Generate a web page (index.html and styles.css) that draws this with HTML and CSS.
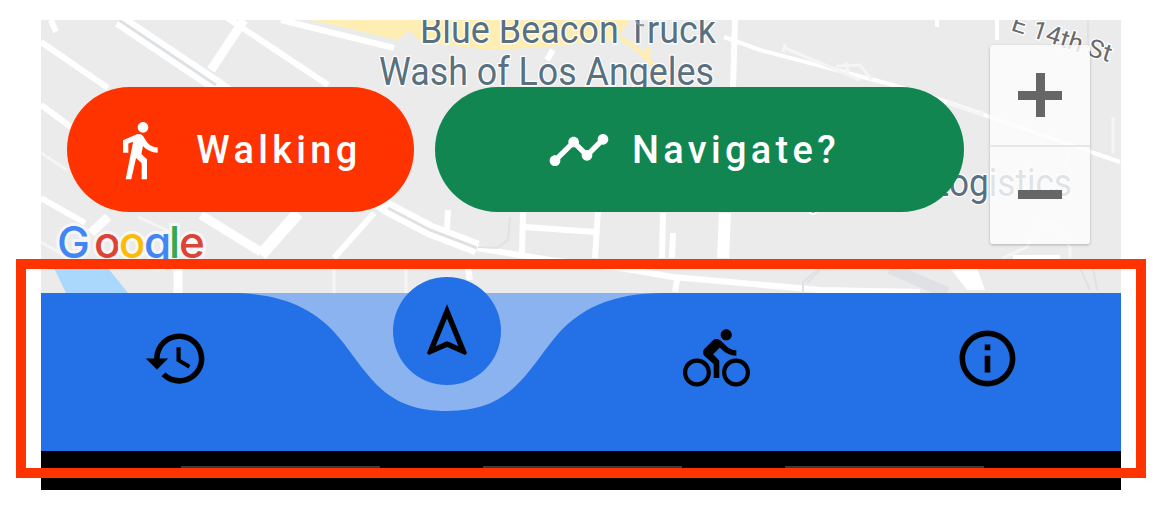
FILE: index.html
```html
<!DOCTYPE html>
<html lang="en">
<head>
    <meta charset="UTF-8">
    <meta name="viewport" content="width=device-width, initial-scale=1.0">
    <title>Navigate</title>
    <link rel="stylesheet" href="styles.css">
</head>
<body>
    <div id="screen">
        <div id="map">
            <svg class="map-art" viewBox="41 20 1080 273" width="1080" height="273">
                <!-- parks and water -->
                <path class="park" d="M311 20L398 40L410 30L420 42L490 50L546 47L616 40L630 20Z"/>
                <path class="park-line" d="M620 38C640 48 655 65 665 85M648 47L648 60"/>
                <path class="water" d="M54 268L108 268L128 293L66 293Z"/>
                <!-- wide road with rail down the middle -->
                <path class="road-wide" d="M119 20L216 85L388 208L430 230L477 248"/>
                <path class="rail" d="M119 20L216 85M388 208L430 230L477 248"/>
                <!-- roads -->
                <g class="road">
                    <path d="M223 15L328 85M41 42L108 88M41 105L71 127M41 198L85 223M281 20L394 48M51 20L56 32"/>
                    <path class="road-md" d="M244 20L211 70M201 215L261 252M108 217L91 233M178 268L178 293"/>
                    <path class="road-lg" d="M298 213L261 255"/>
                    <path d="M374 213L334 258M735 20L733 87M553 50L547 60"/>
                    <path d="M448 210L447 230M523 210L522 253M598 210L595 258M525 227L595 232M663 213L662 258M673 233L672 258M468 268L470 280"/>
                    <path class="road-lg" d="M725 213L723 258"/>
                    <path d="M477 248L550 260L620 268L673 277L820 290L920 292M677 280L675 292"/>
                    <path class="road-sm" d="M724 37L760 50L893 85L947 102L1120 162M997 20L997 40M937 20L937 27"/>
                    <path d="M1013 258L1060 258"/>
                    <path class="wedge" d="M950 268L977 268L985 290L967 290Z"/>
                </g>
                <g class="road-thin">
                    <path d="M41 153L67 170M41 242L60 253M138 217L178 235M334 268L334 293M406 268L406 293"/>
                    <path d="M785 48L860 80M785 44L783 52M836 66L860 65L872 80M846 62L848 74M947 102L982 115L981 110"/>
                    <path d="M1113 117L1113 153M1070 153L1063 170M1003 258L1027 247L1037 223L1053 223L1070 247L1070 258"/>
                </g>
                <g class="road-grey">
                    <path d="M510 217L508 240L497 248L478 247M820 268L803 282L803 292M820 270L807 283M1080 268L1090 290M1093 268L1097 290M1088 20L1088 47"/>
                    <path class="road-grey-wide" d="M890 268L947 293"/>
                </g>
                <!-- labels -->
                <text class="label" x="420" y="43" textLength="296" lengthAdjust="spacingAndGlyphs">Blue Beacon Truck</text>
                <path class="pin" d="M636 20C637 24 640 26 644 25"/>
                <text class="label" x="379" y="85" textLength="335" lengthAdjust="spacingAndGlyphs">Wash of Los Angeles</text>
                <text class="label" x="930" y="196" textLength="142" lengthAdjust="spacingAndGlyphs">Logistics</text>
                <circle class="pin-dot" cx="813" cy="211" r="3"/>
                <text class="label label-street" transform="translate(1010 30) rotate(18)" textLength="104" lengthAdjust="spacingAndGlyphs">E 14th St</text>
                <text class="logo" y="258"><tspan class="blue" x="57">G</tspan><tspan class="red" x="94">o</tspan><tspan class="yellow" x="119">o</tspan><tspan class="blue" x="144">g</tspan><tspan class="green" x="169">l</tspan><tspan class="red" x="179">e</tspan></text>
            </svg>

            <button class="pill pill-walk">
                <svg class="pill-icon" viewBox="0 0 24 24"><path d="M13.5 5.5c1.1 0 2-.9 2-2s-.9-2-2-2-2 .9-2 2 .9 2 2 2zM9.8 8.9L7 23h2.1l1.8-8 2.1 2v6h2v-7.5l-2.1-2 .6-3C14.8 12 16.8 13 19 13v-2c-1.9 0-3.5-1-4.3-2.4l-1-1.6c-.4-.6-1-1-1.7-1-.3 0-.5.1-.8.1L6 8.3V13h2V9.6l1.8-.7"/></svg>
                <span>Walking</span>
            </button>
            <button class="pill pill-nav">
                <svg class="pill-icon" viewBox="0 0 24 24"><path d="M23 8c0 1.1-.9 2-2 2-.18 0-.35-.02-.51-.07l-3.56 3.55c.05.16.07.34.07.52 0 1.1-.9 2-2 2s-2-.9-2-2c0-.18.02-.36.07-.52l-2.55-2.55c-.16.05-.34.07-.52.07s-.36-.02-.52-.07l-4.55 4.56c.05.16.07.33.07.51 0 1.1-.9 2-2 2s-2-.9-2-2 .9-2 2-2c.18 0 .35.02.51.07l4.56-4.55C8.02 9.36 8 9.18 8 9c0-1.1.9-2 2-2s2 .9 2 2c0 .18-.02.36-.07.52l2.55 2.55c.16-.05.34-.07.52-.07s.36.02.52.07l3.55-3.56C19.02 8.35 19 8.18 19 8c0-1.1.9-2 2-2s2 .9 2 2z"/></svg>
                <span>Navigate?</span>
            </button>

            <div class="zoom-box">
                <div class="zoom-btn"><span class="plus"></span></div>
                <div class="zoom-btn zoom-out"><span class="minus"></span></div>
            </div>
        </div>

        <div id="nav">
            <svg class="notch" viewBox="0 0 1080 158" width="1080" height="158"><path d="M189 0C240 0 275 15 300 47C330 85 345 118 406 118C467 118 482 85 512 47C537 15 572 0 623 0Z"/></svg>
            <div class="nav-item">
                <svg class="nav-icon" viewBox="0 0 24 24"><path d="M13 3c-4.97 0-9 4.03-9 9H1l3.89 3.89.07.14L9 12H6c0-3.87 3.13-7 7-7s7 3.13 7 7-3.13 7-7 7c-1.93 0-3.68-.79-4.94-2.06l-1.42 1.42C8.27 19.99 10.51 21 13 21c4.97 0 9-4.03 9-9s-4.03-9-9-9zm-1 5v5l4.28 2.54.72-1.21-3.5-2.08V8H12z"/></svg>
            </div>
            <div class="nav-item">
                <div class="nav-active">
                    <svg class="nav-icon" viewBox="0 0 24 24"><path d="M12 7.27l4.28 10.43-3.47-1.53-.81-.36-.81.36-3.47 1.53L12 7.27M12 2L4.5 20.29l.71.71L12 18l6.79 3 .71-.71L12 2z"/></svg>
                </div>
            </div>
            <div class="nav-item">
                <svg class="nav-icon" viewBox="0 0 24 24"><path d="M15.5 5.5c1.1 0 2-.9 2-2s-.9-2-2-2-2 .9-2 2 .9 2 2 2zM5 12c-2.8 0-5 2.2-5 5s2.2 5 5 5 5-2.2 5-5-2.2-5-5-5zm0 8.5c-1.9 0-3.5-1.6-3.5-3.5s1.6-3.5 3.5-3.5 3.5 1.6 3.5 3.5-1.6 3.5-3.5 3.5zm5.8-10l2.4-2.4.8.8c1.3 1.3 3 2.1 5.1 2.1V9c-1.5 0-2.7-.6-3.6-1.5l-1.9-1.9c-.5-.4-1-.6-1.6-.6s-1.1.2-1.4.6L7.8 8.4c-.4.4-.6.9-.6 1.4 0 .6.2 1.1.6 1.4L11 14v5h2v-6.2l-2.2-2.3zM19 12c-2.8 0-5 2.2-5 5s2.2 5 5 5 5-2.2 5-5-2.2-5-5-5zm0 8.5c-1.9 0-3.5-1.6-3.5-3.5s1.6-3.5 3.5-3.5 3.5 1.6 3.5 3.5-1.6 3.5-3.5 3.5z"/></svg>
            </div>
            <div class="nav-item nav-item-info">
                <svg class="nav-icon" viewBox="0 0 24 24"><path d="M11 7h2v2h-2zm0 4h2v6h-2zm1-9C6.48 2 2 6.48 2 12s4.48 10 10 10 10-4.48 10-10S17.52 2 12 2zm0 18c-4.41 0-8-3.59-8-8s3.59-8 8-8 8 3.59 8 8-3.59 8-8 8z"/></svg>
            </div>
        </div>

        <div id="tabs">
            <span class="tab"></span>
            <span class="tab"></span>
            <span class="tab"></span>
        </div>

        <div id="highlight"></div>
    </div>
</body>
</html>
```

FILE: styles.css
```css
body {
    background-color: #fff;
    margin: 0;
    padding: 20px 0 0 41px;
    height: 508px;
    box-sizing: border-box;
    overflow: hidden;
    font-family: 'Roboto', sans-serif;
}

#screen {
    position: relative;
    width: 1080px;
    display: flex;
    flex-direction: column;
}

#map {
    position: relative;
    height: 273px;
    background-color: #ebebeb;
    overflow: hidden;
}

.map-art {
    display: block;
}

.park {
    fill: #feeeb4;
}

.park-line {
    fill: none;
    stroke: #feeeb4;
    stroke-width: 5;
}

.water {
    fill: #a9d8fc;
}

.road path {
    fill: none;
    stroke: #fff;
    stroke-width: 6;
}

.road .road-sm {
    stroke-width: 4;
}

.road .road-md {
    stroke-width: 9;
}

.road .road-lg {
    stroke-width: 12;
}

.road .wedge {
    fill: #fff;
    stroke: none;
}

.road-wide {
    fill: none;
    stroke: #fff;
    stroke-width: 15;
}

.rail {
    fill: none;
    stroke: #dfe2e5;
    stroke-width: 3;
}

.road-thin path {
    fill: none;
    stroke: #f5f5f6;
    stroke-width: 3;
}

.road-grey path {
    fill: none;
    stroke: #dfe1e4;
    stroke-width: 2;
}

.road-grey .road-grey-wide {
    stroke-width: 12;
}

.label {
    font-family: 'Roboto', sans-serif;
    font-size: 38px;
    fill: #587080;
    stroke: #fff;
    stroke-width: 2.5px;
    paint-order: stroke;
}

.label-street {
    font-size: 25px;
    fill: #6b6b6b;
}

.pin {
    fill: none;
    stroke: #8a9299;
    stroke-width: 2;
}

.pin-dot {
    fill: #9aa1a6;
    stroke: #fff;
    stroke-width: 2;
}

.logo {
    font-family: 'Inter', sans-serif;
    font-weight: 500;
    font-size: 44px;
    stroke: #f6f6f6;
    stroke-width: 6px;
    paint-order: stroke;
}

.blue { fill: #4285f4; }
.red { fill: #db4437; }
.yellow { fill: #fbbc05; }
.green { fill: #34a853; }

.pill {
    position: absolute;
    top: 67px;
    height: 125px;
    border: none;
    border-radius: 63px;
    color: #fff;
    display: flex;
    align-items: center;
    justify-content: center;
    padding: 0 12px 0 0;
    font-family: 'Roboto', sans-serif;
    font-weight: 500;
    font-size: 38px;
    letter-spacing: 4.3px;
}

.pill-walk {
    left: 26px;
    width: 347px;
    gap: 25px;
    background-color: #ff3300;
}

.pill-nav {
    left: 394px;
    width: 529px;
    gap: 21px;
    background-color: #118650;
}

.pill-icon {
    width: 64px;
    height: 64px;
    fill: #fff;
}

.zoom-box {
    position: absolute;
    left: 949px;
    top: 25px;
    width: 100px;
    border-radius: 3px;
    background-color: rgba(252, 252, 252, 0.82);
    box-shadow: 0 1px 3px rgba(0, 0, 0, 0.25);
    display: flex;
    flex-direction: column;
}

.zoom-btn {
    height: 100px;
    display: flex;
    align-items: center;
    justify-content: center;
}

.zoom-out {
    height: 99px;
    box-sizing: border-box;
    border-top: 2px solid #e8e8e8;
    align-items: flex-start;
    padding-top: 43px;
}

.plus, .minus {
    display: block;
    width: 44px;
    height: 9px;
    background-color: #666;
}

.plus {
    position: relative;
}

.plus::after {
    content: '';
    position: absolute;
    left: 17.5px;
    top: -17.5px;
    width: 9px;
    height: 44px;
    background-color: #666;
}

#nav {
    position: relative;
    height: 158px;
    background-color: #2470e6;
    display: flex;
}

.notch {
    position: absolute;
    left: 0;
    top: 0;
    fill: #8bb3f0;
}

.nav-item {
    position: relative;
    flex: 1;
    display: flex;
    align-items: center;
    justify-content: center;
    padding-bottom: 27px;
}

.nav-item-info .nav-icon {
    margin-left: 3px;
}

.nav-icon {
    display: block;
    width: 67px;
    height: 67px;
    fill: #000;
}

.nav-active {
    position: absolute;
    left: 82px;
    top: -16px;
    width: 108px;
    height: 108px;
    border-radius: 50%;
    background-color: #2470e6;
    display: flex;
    align-items: center;
    justify-content: center;
}

.nav-active .nav-icon {
    width: 64px;
    height: 64px;
}

#tabs {
    height: 39px;
    background-color: #000;
    display: flex;
    gap: 103px;
    padding: 15px 0 0 140px;
    box-sizing: border-box;
}

.tab {
    display: block;
    width: 199px;
    height: 4px;
    background-color: #3a3a3a;
}

#highlight {
    position: absolute;
    left: -25px;
    top: 239px;
    width: 1110px;
    height: 199px;
    border: 10px solid #ff3300;
}
```
